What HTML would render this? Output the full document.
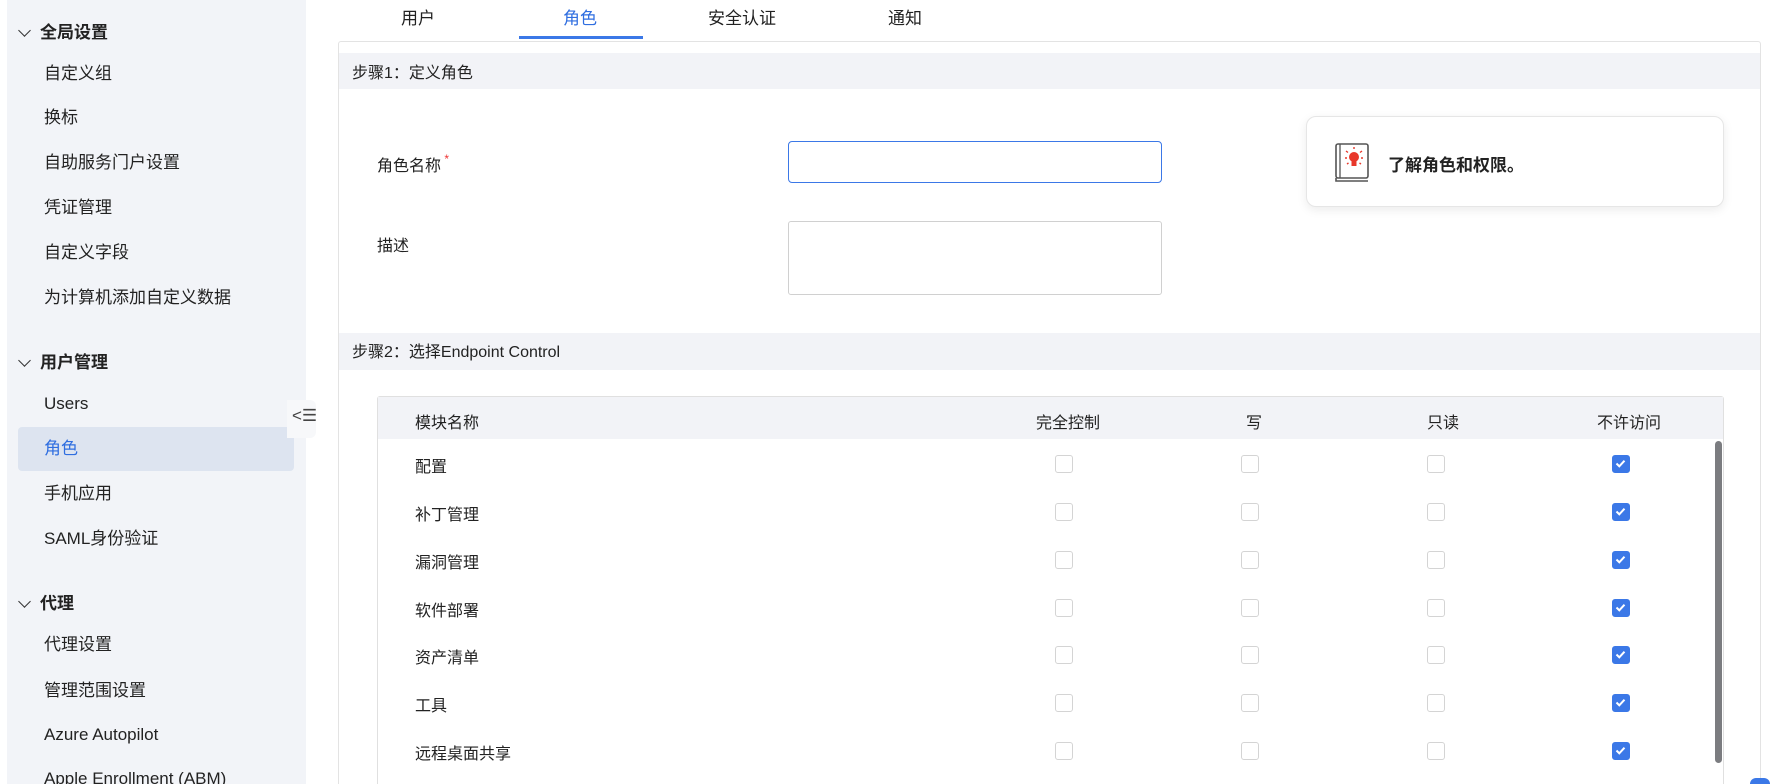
<!DOCTYPE html>
<html style="overflow:hidden;height:784px"><head><meta charset="utf-8"><style>
*{margin:0;padding:0;box-sizing:border-box}
body{width:1784px;height:784px;overflow:hidden;background:#fff;font-family:"Liberation Sans","Noto Sans CJK SC",sans-serif;color:#222;position:relative}
.a{position:absolute;white-space:nowrap}
.side{position:absolute;left:7px;top:0;width:299px;height:784px;background:#f2f4f8}
.si{position:absolute;left:44px;font-size:17px;line-height:20px;color:#222}
.sh{position:absolute;left:40px;font-size:17px;font-weight:bold;line-height:20px}
.chev{position:absolute;left:20px;width:9px;height:9px;border-right:1.5px solid #333;border-bottom:1.5px solid #333;transform:rotate(45deg)}
.tab{position:absolute;top:4px;font-size:17px;transform:translateX(-50%)}
.bar{position:absolute;left:339px;width:1421px;background:#f2f3f7;font-size:16px;padding-left:13px;padding-top:3px}
.cb{position:absolute;width:18px;height:18px;border:1.5px solid #d4d4d4;border-radius:3px;background:#fff}
.cb.on{background:#3b78e7;border-color:#3b78e7}
.hd{position:absolute;top:409px;font-size:16px;transform:translateX(-50%)}
.rl{position:absolute;left:415px;font-size:16px}
</style></head><body>
<div class="side"></div>
<div class="chev" style="top:26px"></div><div class="sh" style="top:23px">全局设置</div>
<div class="si" style="top:64px">自定义组</div>
<div class="si" style="top:108px">换标</div>
<div class="si" style="top:153px">自助服务门户设置</div>
<div class="si" style="top:198px">凭证管理</div>
<div class="si" style="top:243px">自定义字段</div>
<div class="si" style="top:288px">为计算机添加自定义数据</div>
<div class="chev" style="top:356px"></div><div class="sh" style="top:353px">用户管理</div>
<div class="si" style="top:394px">Users</div>
<div class="a" style="left:18px;top:427px;width:276px;height:44px;background:#dde4f0;border-radius:4px"></div>
<div class="si" style="top:439px;color:#2f6ee0">角色</div>
<div class="si" style="top:484px">手机应用</div>
<div class="si" style="top:529px">SAML身份验证</div>
<div class="chev" style="top:597px"></div><div class="sh" style="top:594px">代理</div>
<div class="si" style="top:635px">代理设置</div>
<div class="si" style="top:681px">管理范围设置</div>
<div class="si" style="top:725px">Azure Autopilot</div>
<div class="si" style="top:769px">Apple Enrollment (ABM)</div>
<div class="a" style="left:287px;top:400px;width:29px;height:38px;background:#f7f8fa;border-radius:0 6px 6px 0"></div>
<div class="a" style="left:292px;top:406px;font-size:17px;color:#444">&lt;☰</div>

<div class="tab" style="left:418px">用户</div>
<div class="tab" style="left:580px;color:#2f6ee0">角色</div>
<div class="a" style="left:519px;top:36px;width:124px;height:3px;background:#3b78e7"></div>
<div class="tab" style="left:742px">安全认证</div>
<div class="tab" style="left:905px">通知</div>

<div class="a" style="left:338px;top:41px;width:1423px;height:760px;border:1px solid #e3e3e3;border-radius:3px"></div>
<div class="bar" style="top:53px;height:36px;line-height:36px">步骤1：定义角色</div>
<div class="a" style="left:377px;top:152px;font-size:16px">角色名称<span style="color:#e33;font-size:12px;vertical-align:top"> *</span></div>
<div class="a" style="left:788px;top:141px;width:374px;height:42px;border:1.5px solid #3b78e7;border-radius:4px"></div>
<div class="a" style="left:377px;top:232px;font-size:16px">描述</div>
<div class="a" style="left:788px;top:221px;width:374px;height:74px;border:1px solid #d0d0d0;border-radius:3px"></div>
<div class="a" style="left:1306px;top:116px;width:418px;height:91px;border:1px solid #e6e6e6;border-radius:10px;box-shadow:0 3px 10px rgba(0,0,0,.08);background:#fff"></div>
<svg class="a" style="left:1334px;top:142px" width="36" height="42" viewBox="0 0 36 42"><rect x="2" y="2" width="32" height="34" rx="2" fill="none" stroke="#555" stroke-width="1.6"/><path d="M2 36 v3 h32" fill="none" stroke="#555" stroke-width="1.6"/><line x1="6" y1="2" x2="6" y2="36" stroke="#555" stroke-width="1.3"/><circle cx="20" cy="15" r="5" fill="#e8382b"/><rect x="17.5" y="19" width="5" height="5" fill="#e8382b"/><path d="M20 5v2M12 9l2 1.5M28 9l-2 1.5M11 16h2M27 16h2M13 22l1.5-1M27 22l-1.5-1" stroke="#e8382b" stroke-width="1.4"/></svg>
<div class="a" style="left:1388px;top:151px;font-size:17px;font-weight:bold">了解角色和权限。</div>

<div class="bar" style="top:333px;height:37px;line-height:34px">步骤2：选择Endpoint Control</div>
<div class="a" style="left:377px;top:396px;width:1347px;height:400px;border:1px solid #e0e0e0;border-radius:3px"></div>
<div class="a" style="left:378px;top:397px;width:1345px;height:42px;background:#f2f3f7"></div>
<div class="a" style="left:415px;top:409px;font-size:16px">模块名称</div>
<div class="hd" style="left:1068px">完全控制</div>
<div class="hd" style="left:1254px">写</div>
<div class="hd" style="left:1443px">只读</div>
<div class="hd" style="left:1629px">不许访问</div>
<div class="a" style="left:1715px;top:441px;width:7px;height:322px;background:#7b7c80;border-radius:4px"></div>

<div class="rl" style="top:453px">配置</div>
<div class="rl" style="top:501px">补丁管理</div>
<div class="rl" style="top:549px">漏洞管理</div>
<div class="rl" style="top:597px">软件部署</div>
<div class="rl" style="top:644px">资产清单</div>
<div class="rl" style="top:692px">工具</div>
<div class="rl" style="top:740px">远程桌面共享</div>

<div id="cbs"></div>
<script>
var ys=[464,512,560,608,655,703,751],xs=[1064,1250,1436,1621],h='';
ys.forEach(function(y){xs.forEach(function(x,i){h+='<div class="cb'+(i==3?' on':'')+'" style="left:'+(x-9)+'px;top:'+(y-9)+'px">'+(i==3?'<svg width="15" height="15" viewBox="0 0 15 15" style="position:absolute;left:0;top:0"><path d="M3.5 7.5l2.8 2.8 5.2-5.6" fill="none" stroke="#fff" stroke-width="2"/></svg>':'')+'</div>';});});
document.getElementById('cbs').innerHTML=h;
</script>
<div class="a" style="left:1750px;top:778px;width:20px;height:6px;border-radius:10px 10px 0 0;background:#3b78e7"></div>
</body></html>
